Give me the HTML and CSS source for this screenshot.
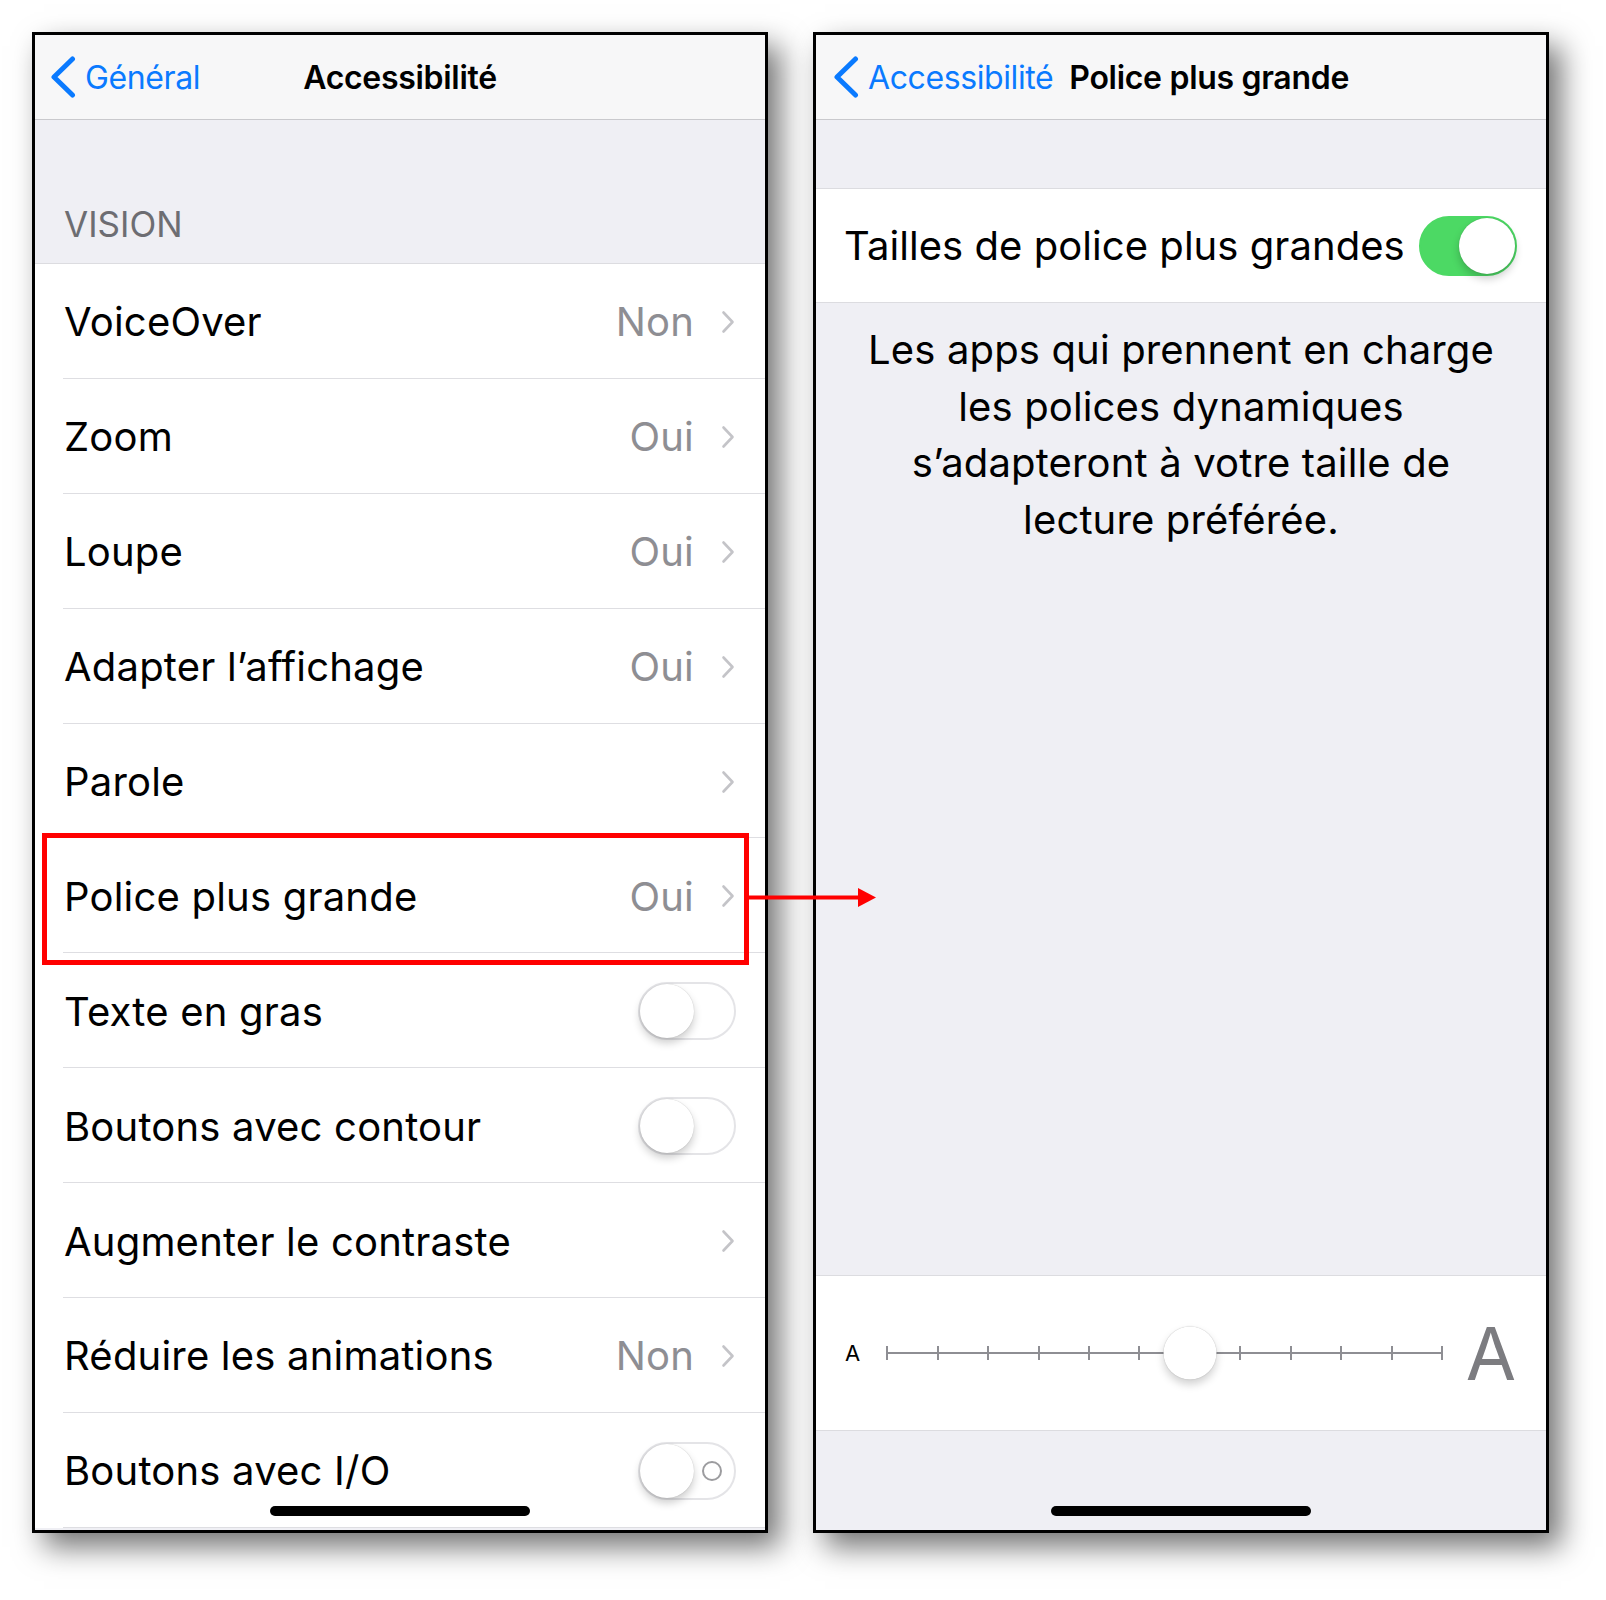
FILE: index.html
```html
<!DOCTYPE html>
<html lang="fr">
<head>
<meta charset="utf-8">
<title>Accessibilité – Police plus grande</title>
<link rel="stylesheet" href="styles.css">
</head>
<body>
<div class="stage">
  <section class="phone phone--left">
    <header class="nav">
      <div class="back">
        <svg class="back-chev" viewBox="0 0 26 42" width="26" height="42"><path d="M22.5 3 L4 21 L22.5 39" fill="none" stroke="#0a7aff" stroke-width="5" stroke-linecap="round" stroke-linejoin="round"/></svg>
        <span>Général</span>
      </div>
      <div class="nav-title">Accessibilité</div>
      <div></div>
    </header>
    <div class="group-header">VISION</div>
    <ul class="list">
      <li class="row"><div class="row-inner"><span class="label">VoiceOver</span><span class="value">Non</span><svg class="chev" viewBox="0 0 14 24" width="14" height="24"><path d="M2.5 2.5 L11.5 12 L2.5 21.5" fill="none" stroke="#c4c4c8" stroke-width="2.6" stroke-linecap="round" stroke-linejoin="round"/></svg></div></li>
      <li class="row"><div class="row-inner"><span class="label">Zoom</span><span class="value">Oui</span><svg class="chev" viewBox="0 0 14 24" width="14" height="24"><path d="M2.5 2.5 L11.5 12 L2.5 21.5" fill="none" stroke="#c4c4c8" stroke-width="2.6" stroke-linecap="round" stroke-linejoin="round"/></svg></div></li>
      <li class="row"><div class="row-inner"><span class="label">Loupe</span><span class="value">Oui</span><svg class="chev" viewBox="0 0 14 24" width="14" height="24"><path d="M2.5 2.5 L11.5 12 L2.5 21.5" fill="none" stroke="#c4c4c8" stroke-width="2.6" stroke-linecap="round" stroke-linejoin="round"/></svg></div></li>
      <li class="row"><div class="row-inner"><span class="label">Adapter l’affichage</span><span class="value">Oui</span><svg class="chev" viewBox="0 0 14 24" width="14" height="24"><path d="M2.5 2.5 L11.5 12 L2.5 21.5" fill="none" stroke="#c4c4c8" stroke-width="2.6" stroke-linecap="round" stroke-linejoin="round"/></svg></div></li>
      <li class="row"><div class="row-inner"><span class="label">Parole</span><svg class="chev" viewBox="0 0 14 24" width="14" height="24"><path d="M2.5 2.5 L11.5 12 L2.5 21.5" fill="none" stroke="#c4c4c8" stroke-width="2.6" stroke-linecap="round" stroke-linejoin="round"/></svg></div></li>
      <li class="row"><div class="row-inner"><span class="label">Police plus grande</span><span class="value">Oui</span><svg class="chev" viewBox="0 0 14 24" width="14" height="24"><path d="M2.5 2.5 L11.5 12 L2.5 21.5" fill="none" stroke="#c4c4c8" stroke-width="2.6" stroke-linecap="round" stroke-linejoin="round"/></svg></div></li>
      <li class="row"><div class="row-inner row-inner--switch"><span class="label">Texte en gras</span><span class="toggle"><span class="knob"></span></span></div></li>
      <li class="row"><div class="row-inner row-inner--switch"><span class="label">Boutons avec contour</span><span class="toggle"><span class="knob"></span></span></div></li>
      <li class="row"><div class="row-inner"><span class="label">Augmenter le contraste</span><svg class="chev" viewBox="0 0 14 24" width="14" height="24"><path d="M2.5 2.5 L11.5 12 L2.5 21.5" fill="none" stroke="#c4c4c8" stroke-width="2.6" stroke-linecap="round" stroke-linejoin="round"/></svg></div></li>
      <li class="row"><div class="row-inner"><span class="label">Réduire les animations</span><span class="value">Non</span><svg class="chev" viewBox="0 0 14 24" width="14" height="24"><path d="M2.5 2.5 L11.5 12 L2.5 21.5" fill="none" stroke="#c4c4c8" stroke-width="2.6" stroke-linecap="round" stroke-linejoin="round"/></svg></div></li>
      <li class="row"><div class="row-inner row-inner--switch"><span class="label">Boutons avec I/O</span><span class="toggle"><span class="knob"></span><span class="io-ring"></span></span></div></li>
    </ul>
    <div class="home-indicator"></div>
  </section>

  <section class="phone phone--right">
    <header class="nav nav--inline">
      <div class="back">
        <svg class="back-chev" viewBox="0 0 26 42" width="26" height="42"><path d="M22.5 3 L4 21 L22.5 39" fill="none" stroke="#0a7aff" stroke-width="5" stroke-linecap="round" stroke-linejoin="round"/></svg>
        <span>Accessibilité</span>
      </div>
      <div class="nav-title">Police plus grande</div>
    </header>
    <div class="gap-top"></div>
    <div class="cell cell--switch">
      <span class="label">Tailles de police plus grandes</span>
      <span class="toggle toggle--on"><span class="knob"></span></span>
    </div>
    <p class="footer-text">Les apps qui prennent en charge<br>les polices dynamiques<br>s’adapteront à votre taille de<br>lecture préférée.</p>
    <div class="cell cell--slider">
      <span class="a-small">A</span>
      <div class="track">
        <i class="tick"></i><i class="tick"></i><i class="tick"></i><i class="tick"></i><i class="tick"></i><i class="tick"></i><i class="tick"></i><i class="tick"></i><i class="tick"></i><i class="tick"></i><i class="tick"></i><i class="tick"></i>
        <span class="thumb" style="left:54.545%"></span>
      </div>
      <span class="a-big">A</span>
    </div>
    <div class="home-indicator"></div>
  </section>

  <div class="callout"></div>
  <svg class="arrow" viewBox="0 0 130 25" width="130" height="25"><line x1="0" y1="12.5" x2="112" y2="12.5" stroke="#ff0000" stroke-width="4"/><polygon points="109,3 127,12.5 109,22" fill="#ff0000"/></svg>
</div>
</body>
</html>
```

FILE: styles.css
```css
* { box-sizing: border-box; margin: 0; padding: 0; }

body {
  margin: 0;
  width: 1606px;
  height: 1600px;
  overflow: hidden;
  background: #ffffff;
  font-family: Inter, "Noto Sans", sans-serif;
  color: #000;
}

.stage {
  position: relative;
  display: flex;
  gap: 45px;
  padding: 32px 0 0 32px;
}

.phone {
  position: relative;
  width: 736px;
  height: 1501px;
  border: 3px solid #000;
  background: #efeff4;
  box-shadow: 12px 14px 28px rgba(0, 0, 0, 0.55);
  overflow: hidden;
  display: flex;
  flex-direction: column;
}

/* nav bar */
.nav {
  flex: none;
  height: 85px;
  background: #f7f7f8;
  border-bottom: 1px solid #c9c9cd;
  display: grid;
  grid-template-columns: 1fr auto 1fr;
  align-items: center;
}
.nav--inline {
  display: flex;
  gap: 16px;
  padding-left: 17px;
}
.back {
  display: flex;
  align-items: center;
  gap: 9px;
  color: #0a7aff;
  font-size: 32px;
  letter-spacing: -0.4px;
  justify-self: start;
  margin-left: 15px;
}
.nav--inline .back { margin-left: 0; }
.back-chev { flex: none; }
.nav-title {
  font-size: 32px;
  font-weight: 600;
  letter-spacing: -0.3px;
}

/* group header */
.group-header {
  flex: none;
  height: 144px;
  border-bottom: 1px solid #dcdce0;
  display: flex;
  align-items: flex-end;
  padding: 0 29px 21px;
  font-size: 35px;
  line-height: 35px;
  color: #6d6d72;
}

/* rows */
.list { list-style: none; background: #fff; }
.row {
  height: 114.9px;
  padding-left: 28px;
  background: #fff;
  display: flex;
}
.row-inner {
  flex: 1;
  display: flex;
  align-items: center;
  border-bottom: 1px solid #dedee2;
  padding: 2px 30px 0 1px;
}
.row-inner--switch { padding-right: 29px; }
.label {
  flex: 1;
  font-size: 40px;
  letter-spacing: 0.2px;
  white-space: nowrap;
}
.value {
  font-size: 40px;
  color: #8e8e93;
  margin-right: 27px;
  letter-spacing: 0.2px;
}
.chev { flex: none; }

/* switches */
.toggle {
  flex: none;
  width: 98px;
  height: 58px;
  border-radius: 29px;
  border: 2px solid #e4e4e7;
  background: #fff;
  display: flex;
  align-items: center;
}
.knob {
  flex: none;
  width: 54px;
  height: 54px;
  border-radius: 50%;
  background: #fff;
  box-shadow: 0 5px 8px rgba(0, 0, 0, 0.2), 0 0 1px rgba(0, 0, 0, 0.25);
}
.toggle--on {
  height: 60px;
  border-radius: 30px;
  background: #4cd964;
  border-color: #4cd964;
  justify-content: flex-end;
}
.toggle--on .knob { width: 56px; height: 56px; }
.io-ring {
  width: 20px;
  height: 20px;
  border: 2px solid #9c9c9f;
  border-radius: 50%;
  margin-left: auto;
  margin-right: 12px;
}

/* right panel */
.gap-top { flex: none; height: 68px; }
.cell {
  flex: none;
  background: #fff;
  border-top: 1px solid #dcdce0;
  border-bottom: 1px solid #dcdce0;
}
.cell--switch {
  height: 115px;
  display: flex;
  align-items: center;
  padding: 0 29px 0 28px;
}
.cell--switch .label { letter-spacing: 0.05px; }
.footer-text {
  padding-top: 19px;
  text-align: center;
  font-size: 40px;
  line-height: 56.6px;
  letter-spacing: 0.15px;
}
.cell--slider {
  margin-top: auto;
  margin-bottom: 99px;
  height: 156px;
  display: flex;
  align-items: center;
  padding: 0 30px 0 29px;
}
.a-small { font-size: 22px; line-height: 1; }
.track {
  position: relative;
  width: 557px;
  height: 14px;
  margin-left: 26px;
  display: flex;
  justify-content: space-between;
  align-items: center;
  background: linear-gradient(#8e8e93, #8e8e93) center / 100% 2px no-repeat;
}
.tick { width: 2px; height: 14px; background: #8e8e93; }
.thumb {
  position: absolute;
  top: 50%;
  width: 53px;
  height: 53px;
  border-radius: 50%;
  background: #fff;
  transform: translate(-50%, -50%);
  box-shadow: 0 5px 9px rgba(0, 0, 0, 0.18), 0 0 1px rgba(0, 0, 0, 0.3);
}
.a-big {
  margin-left: auto;
  font-size: 73px;
  line-height: 1;
  color: #7c7c80;
}

.home-indicator {
  position: absolute;
  left: 50%;
  bottom: 14px;
  width: 260px;
  height: 10px;
  border-radius: 5px;
  background: #000;
  transform: translateX(-50%);
}

/* annotation overlay */
.callout {
  position: absolute;
  left: 42px;
  top: 833px;
  width: 707px;
  height: 132px;
  border: 5px solid #ff0000;
  z-index: 2;
}
.arrow {
  position: absolute;
  left: 749px;
  top: 885px;
  z-index: 2;
}
```
